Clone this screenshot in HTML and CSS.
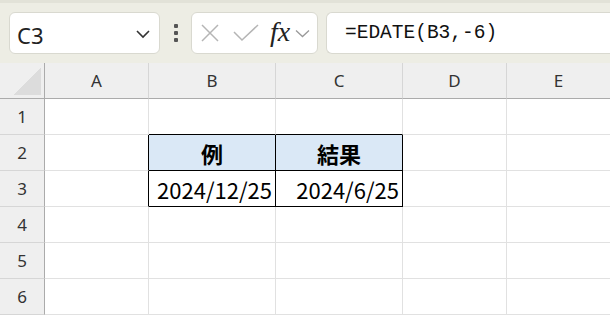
FILE: index.html
```html
<!DOCTYPE html>
<html lang="ja">

<head>
    <meta charset="UTF-8">
    <title>EDATE</title>
    <link rel="stylesheet" href="styles.css">
</head>

<body>

    <div class="toolbar">
        <div class="name-box">
            <span class="name-text">C3</span>
            <svg class="chev" width="16" height="10" viewBox="0 0 16 10">
                <path d="M2 2 L8 8 L14 2" fill="none" stroke="#333" stroke-width="1.6" />
            </svg>
        </div>

        <div class="dots">
            <span></span><span></span><span></span>
        </div>

        <div class="fx-box">
            <svg width="20" height="18" viewBox="0 0 20 18">
                <path d="M2 1 L18 17 M18 1 L2 17" stroke="#b5b5b5" stroke-width="1.5" />
            </svg>
            <svg width="26" height="18" viewBox="0 0 26 18">
                <path d="M1 8 L9 16 L25 1" fill="none" stroke="#b5b5b5" stroke-width="1.5" />
            </svg>
            <span class="fx">fx</span>
            <svg width="15" height="9" viewBox="0 0 15 9">
                <path d="M1 1.5 L7.5 7.5 L14 1.5" fill="none" stroke="#999" stroke-width="1.3" />
            </svg>
        </div>

        <div class="formula">=EDATE(B3,-6)</div>
    </div>

    <div class="sheet">
        <div class="corner"><div class="tri"></div></div>
        <div class="col-head">A</div>
        <div class="col-head">B</div>
        <div class="col-head">C</div>
        <div class="col-head">D</div>
        <div class="col-head">E</div>

        <div class="row-head">1</div>
        <div class="cell"></div>
        <div class="cell bot"></div>
        <div class="cell bot"></div>
        <div class="cell"></div>
        <div class="cell"></div>

        <div class="row-head">2</div>
        <div class="cell side"></div>
        <div class="cell tb th">例</div>
        <div class="cell tb th">結果</div>
        <div class="cell"></div>
        <div class="cell"></div>

        <div class="row-head">3</div>
        <div class="cell side"></div>
        <div class="cell tb num">2024/12/25</div>
        <div class="cell tb num">2024/6/25</div>
        <div class="cell"></div>
        <div class="cell"></div>

        <div class="row-head">4</div>
        <div class="cell"></div>
        <div class="cell"></div>
        <div class="cell"></div>
        <div class="cell"></div>
        <div class="cell"></div>

        <div class="row-head">5</div>
        <div class="cell"></div>
        <div class="cell"></div>
        <div class="cell"></div>
        <div class="cell"></div>
        <div class="cell"></div>

        <div class="row-head">6</div>
        <div class="cell"></div>
        <div class="cell"></div>
        <div class="cell"></div>
        <div class="cell"></div>
        <div class="cell"></div>
    </div>

</body>

</html>
```

FILE: styles.css
```css
* {
    margin: 0;
    padding: 0;
    box-sizing: border-box;
}

body {
    width: 610px;
    height: 316px;
    overflow: hidden;
    background-color: #ffffff;
    font-family: "Noto Sans", "Noto Sans CJK JP", sans-serif;
}

.toolbar {
    height: 63px;
    background-color: #ededE4;
    border-top: 3px solid #e2e2d8;
    padding: 9px 0 0 9px;
    display: flex;
    align-items: flex-start;
}

.name-box,
.fx-box,
.formula {
    height: 42px;
    background-color: white;
    border: 1px solid #d9d9d0;
    border-radius: 6px;
    display: flex;
    align-items: center;
}

.name-box {
    width: 151px;
    padding: 0 8px 0 7px;
    justify-content: space-between;
}

.name-text {
    font-size: 22px;
    color: #222;
    margin-top: 3px;
}

.chev {
    margin-top: 2px;
}

.dots {
    width: 31px;
    height: 42px;
    display: flex;
    flex-direction: column;
    align-items: center;
    justify-content: center;
    gap: 3px;
}

.dots span {
    width: 4px;
    height: 4px;
    background-color: #555;
    border-radius: 1px;
}

.fx-box {
    width: 127px;
    padding: 0 2px 0 8px;
    gap: 0;
}

.fx-box svg:nth-child(1) {
    margin-right: 13px;
}

.fx-box svg:nth-child(2) {
    margin-right: 11px;
}

.fx {
    font-family: "Liberation Serif", serif;
    font-style: italic;
    font-size: 28px;
    color: #222;
    margin-right: 5px;
    margin-bottom: 3px;
}

.formula {
    flex: 1;
    margin-left: 8px;
    border-right: none;
    border-radius: 6px 0 0 6px;
    padding-left: 18px;
    font-family: "Liberation Mono", monospace;
    font-size: 19.5px;
    color: #111;
}

.sheet {
    display: grid;
    grid-template-columns: 45px 104px 127px 127px 104px 104px;
    grid-template-rows: 36px 36px 36px 36px 36px 36px 36px;
}

.corner {
    background-color: #efefef;
    border-right: 1px solid #ababab;
    border-bottom: 1px solid #ababab;
    position: relative;
}

.tri {
    position: absolute;
    right: 3px;
    bottom: 3px;
    width: 28px;
    height: 28px;
    background: linear-gradient(to top left, #dcdcdc 50%, transparent 50%);
}

.col-head {
    background-color: #efefef;
    border-right: 1px solid #d6d6d6;
    border-bottom: 1px solid #ababab;
    display: flex;
    align-items: center;
    justify-content: center;
    font-size: 17px;
    color: #333;
}

.row-head {
    background-color: #efefef;
    border-right: 1px solid #ababab;
    border-bottom: 1px solid #d6d6d6;
    display: flex;
    align-items: center;
    justify-content: center;
    font-size: 17px;
    color: #333;
}

.cell {
    border-right: 1px solid #e1e1e1;
    border-bottom: 1px solid #e1e1e1;
    display: flex;
    align-items: center;
    font-family: "Noto Sans CJK JP", sans-serif;
    font-size: 22px;
    color: #000;
}

.cell.bot {
    border-bottom-color: #000;
}

.cell.side {
    border-right-color: #000;
}

.cell.tb {
    border-right-color: #000;
    border-bottom-color: #000;
}

.th {
    background-color: #dae8f6;
    justify-content: center;
    font-weight: bold;
}

.num {
    justify-content: flex-end;
    padding-right: 3px;
}
```
